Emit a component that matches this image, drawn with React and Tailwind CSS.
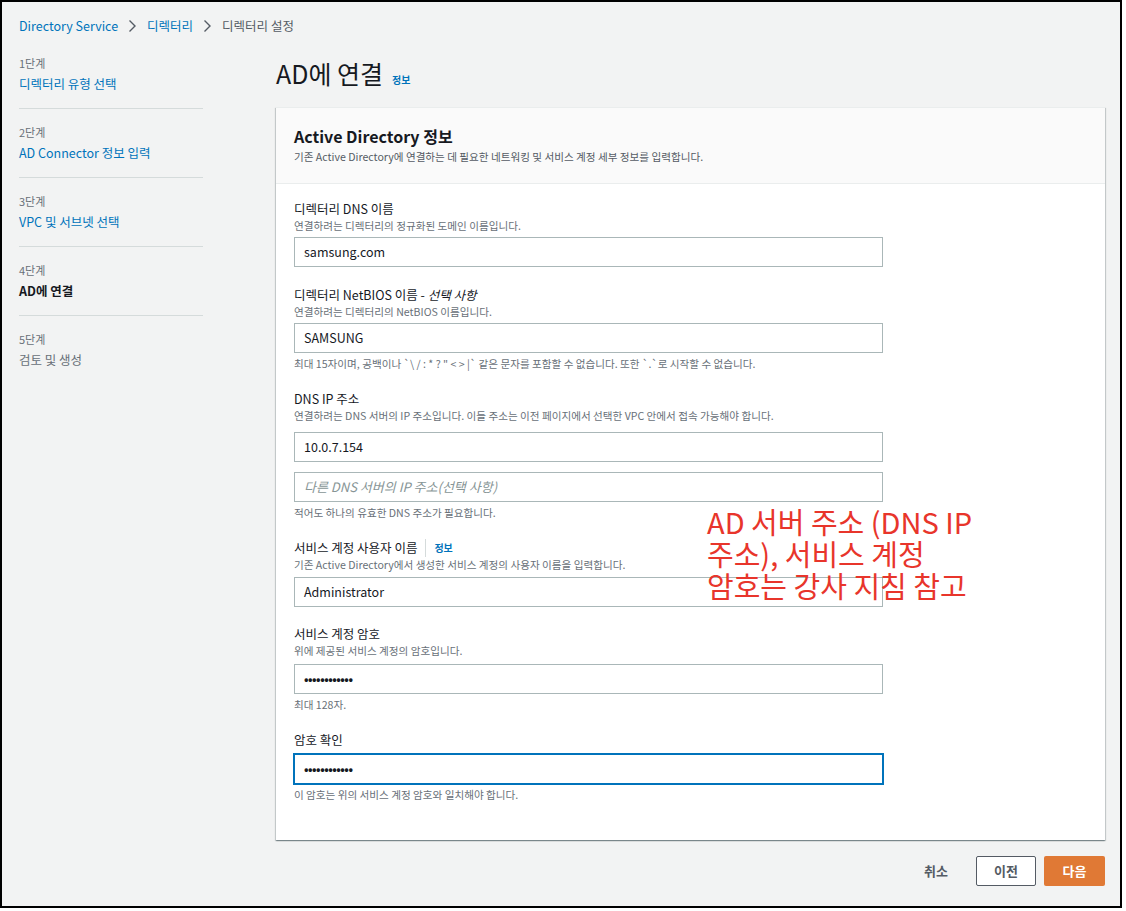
import React from "react";

const font = { fontFamily: '"Noto Sans CJK KR", "Noto Sans", sans-serif' };

const netbiosHint =
  '최대 15자이며, 공백이나 `\\ / : * ? " < > |` 같은 문자를 포함할 수 없습니다. 또한 `.`로 시작할 수 없습니다.';

function Chevron() {
  return (
    <svg width="9" height="14" viewBox="0 0 9 14" className="mx-[10px]">
      <path d="M1.5 1.5 L7 7 L1.5 12.5" fill="none" stroke="#545b64" strokeWidth="1.4" />
    </svg>
  );
}

function Step({ n, title, state }) {
  return (
    <div className="pt-[14px] pb-[12px] border-b border-[#d5dbdb]">
      <div className="text-[11px] leading-[18px] text-[#687078]">{n}단계</div>
      <div
        className={`text-[12.5px] leading-[24px] ${
          state === "done"
            ? "text-[#0073bb]"
            : state === "current"
            ? "text-[#16191f] font-bold"
            : "text-[#687078]"
        }`}
      >
        {title}
      </div>
    </div>
  );
}

function Field({ label, desc, children, hint, info, className = "" }) {
  return (
    <div className={className}>
      <div className="flex items-center text-[12.5px] leading-[18px] text-[#16191f]">
        {label}
        {info && (
          <span className="ml-[8px] pl-[8px] border-l border-[#d5dbdb] text-[10px] font-bold text-[#0073bb] leading-[18px]">
            정보
          </span>
        )}
      </div>
      {desc && <div className="text-[10.6px] leading-[16px] text-[#687078]">{desc}</div>}
      {children}
      {hint && <div className="mt-[3px] text-[10.6px] leading-[16px] text-[#687078]">{hint}</div>}
    </div>
  );
}

function Input({ value, placeholder, focus, password, className = "" }) {
  return (
    <div
      className={`w-[589px] h-[30px] bg-white flex items-center px-[9px] text-[12.5px] ${
        focus
          ? "border border-[#0073bb] shadow-[0_0_0_1px_#0073bb]"
          : "border border-[#aab7b8]"
      } ${className}`}
    >
      {value ? (
        <span className={password ? "text-[12px] font-bold tracking-[-0.5px] text-[#16191f]" : "text-[#16191f]"}>
          {value}
        </span>
      ) : (
        <span className="italic text-[13px] text-[#879596]">{placeholder}</span>
      )}
    </div>
  );
}

export default function App() {
  return (
    <div className="bg-white min-h-screen" style={font}>
      <div className="relative w-[1122px] h-[908px] border-2 border-black bg-[#f2f3f3]">
        {/* Breadcrumb */}
        <div className="flex items-center pt-[14px] pl-[17px] h-[34px] text-[12.5px] leading-[20px]">
          <span className="text-[#0073bb]">Directory Service</span>
          <Chevron />
          <span className="text-[#0073bb]">디렉터리</span>
          <Chevron />
          <span className="text-[#545b64]">디렉터리 설정</span>
        </div>

        <div className="flex pl-[17px] pt-[5px]">
          {/* Steps nav */}
          <div className="w-[184px] shrink-0 -mt-[1px]">
            <Step n={1} title="디렉터리 유형 선택" state="done" />
            <Step n={2} title="AD Connector 정보 입력" state="done" />
            <Step n={3} title="VPC 및 서브넷 선택" state="done" />
            <Step n={4} title="AD에 연결" state="current" />
            <div className="pt-[14px]">
              <div className="text-[11px] leading-[18px] text-[#687078]">5단계</div>
              <div className="text-[12.5px] leading-[24px] text-[#687078]">검토 및 생성</div>
            </div>
          </div>

          {/* Main */}
          <div className="ml-[73px] w-[829px]">
            <div className="flex items-baseline pt-[16px] h-[66px]">
              <h1 className="text-[25px] leading-[32px] text-[#16191f]">AD에 연결</h1>
              <span className="ml-[9px] text-[10px] font-bold text-[#0073bb]">정보</span>
            </div>

            <div className="bg-white border-t border-[#eaeded] shadow-[0_1px_1px_0_rgba(0,28,36,0.3),1px_1px_1px_0_rgba(0,28,36,0.15),-1px_1px_1px_0_rgba(0,28,36,0.15)]">
              <div className="bg-[#fafafa] border-b border-[#eaeded] px-[18px] pt-[17px] pb-[18px]">
                <div className="text-[16px] leading-[22px] font-bold text-[#16191f]">Active Directory 정보</div>
                <div className="mt-[2px] text-[10.6px] leading-[16px] text-[#545b64]">
                  기존 Active Directory에 연결하는 데 필요한 네트워킹 및 서비스 계정 세부 정보를 입력합니다.
                </div>
              </div>

              <div className="px-[18px] pt-[16px] pb-[37px]">
                <Field label="디렉터리 DNS 이름" desc="연결하려는 디렉터리의 정규화된 도메인 이름입니다.">
                  <Input value="samsung.com" className="mt-[3px]" />
                </Field>

                <Field
                  className="mt-[19px]"
                  label={
                    <span>
                      디렉터리 NetBIOS 이름 - <i>선택 사항</i>
                    </span>
                  }
                  desc="연결하려는 디렉터리의 NetBIOS 이름입니다."
                  hint={netbiosHint}
                >
                  <Input value="SAMSUNG" className="mt-[3px]" />
                </Field>

                <Field
                  className="mt-[18px]"
                  label="DNS IP 주소"
                  desc="연결하려는 DNS 서버의 IP 주소입니다. 이들 주소는 이전 페이지에서 선택한 VPC 안에서 접속 가능해야 합니다."
                  hint="적어도 하나의 유효한 DNS 주소가 필요합니다."
                >
                  <Input value="10.0.7.154" className="mt-[8px]" />
                  <Input placeholder="다른 DNS 서버의 IP 주소(선택 사항)" className="mt-[10px]" />
                </Field>

                <Field
                  className="mt-[18px]"
                  label="서비스 계정 사용자 이름"
                  info
                  desc="기존 Active Directory에서 생성한 서비스 계정의 사용자 이름을 입력합니다."
                >
                  <Input value="Administrator" className="mt-[4px]" />
                </Field>

                <Field
                  className="mt-[18px]"
                  label="서비스 계정 암호"
                  desc="위에 제공된 서비스 계정의 암호입니다."
                  hint="최대 128자."
                >
                  <Input value="••••••••••••" password className="mt-[5px]" />
                </Field>

                <Field className="mt-[18px]" label="암호 확인" hint="이 암호는 위의 서비스 계정 암호와 일치해야 합니다.">
                  <Input value="••••••••••••" password focus className="mt-[5px]" />
                </Field>
              </div>
            </div>

            <div className="flex items-center justify-end mt-[16px] gap-[8px]">
              <button className="h-[30px] px-[18px] text-[13px] font-bold text-[#545b64] mr-[2px]">취소</button>
              <button className="h-[30px] w-[60px] text-[13px] font-bold text-[#545b64] bg-white border border-[#545b64] rounded-[2px]">
                이전
              </button>
              <button className="h-[30px] w-[61px] text-[13px] font-bold text-white bg-[#e07935] rounded-[2px]">
                다음
              </button>
            </div>
          </div>
        </div>

        {/* Annotation overlay */}
        <div className="absolute left-[705px] top-[503px] text-[29px] leading-[32px] text-[#e8352b]">
          AD 서버 주소 (DNS IP
          <br />
          주소), 서비스 계정
          <br />
          암호는 강사 지침 참고
        </div>
      </div>
    </div>
  );
}
